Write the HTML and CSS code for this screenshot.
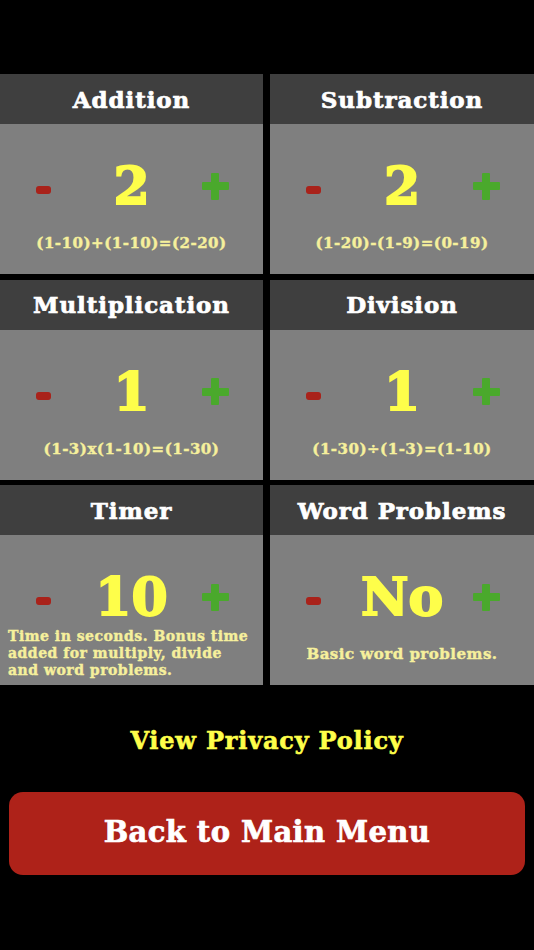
FILE: index.html
```html
<!DOCTYPE html>
<html>
<head>
<meta charset="utf-8">
<link rel="stylesheet" href="styles.css">
</head>
<body>
<div class="page">
  <div class="grid">
    <div class="card">
      <div class="head">Addition</div>
      <div class="body">
        <div class="ctrl"><span class="minus"></span><span class="val">2</span><span class="plus"></span></div>
        <div class="note formula">(1-10)+(1-10)=(2-20)</div>
      </div>
    </div>
    <div class="card">
      <div class="head">Subtraction</div>
      <div class="body">
        <div class="ctrl"><span class="minus"></span><span class="val">2</span><span class="plus"></span></div>
        <div class="note formula">(1-20)-(1-9)=(0-19)</div>
      </div>
    </div>
    <div class="card">
      <div class="head">Multiplication</div>
      <div class="body">
        <div class="ctrl"><span class="minus"></span><span class="val">1</span><span class="plus"></span></div>
        <div class="note formula">(1-3)x(1-10)=(1-30)</div>
      </div>
    </div>
    <div class="card">
      <div class="head">Division</div>
      <div class="body">
        <div class="ctrl"><span class="minus"></span><span class="val">1</span><span class="plus"></span></div>
        <div class="note formula">(1-30)÷(1-3)=(1-10)</div>
      </div>
    </div>
    <div class="card">
      <div class="head">Timer</div>
      <div class="body">
        <div class="ctrl"><span class="minus"></span><span class="val">10</span><span class="plus"></span></div>
        <div class="note desc">Time in seconds. Bonus time<br>added for multiply, divide<br>and word problems.</div>
      </div>
    </div>
    <div class="card">
      <div class="head">Word Problems</div>
      <div class="body">
        <div class="ctrl"><span class="minus"></span><span class="val">No</span><span class="plus"></span></div>
        <div class="note formula">Basic word problems.</div>
      </div>
    </div>
  </div>
  <div class="privacy">View Privacy Policy</div>
  <div class="back">Back to Main Menu</div>
</div>
</body>
</html>
```
FILE: styles.css
```css
html, body {
  margin: 0;
  padding: 0;
  background: #000;
}
.page {
  width: 534px;
  height: 950px;
  font-family: "DejaVu Serif", "Liberation Serif", serif;
  font-weight: bold;
  overflow: hidden;
}
.grid {
  margin-top: 74px;
  display: grid;
  grid-template-columns: 263px 264px;
  grid-auto-rows: 200px;
  column-gap: 7px;
  row-gap: 5.5px;
}
.card {
  display: flex;
  flex-direction: column;
}
.head {
  height: 50px;
  background: #3f3f3f;
  color: #fff;
  font-size: 23px;
  letter-spacing: 0.9px;
  -webkit-text-stroke: 0.7px #fff;
  display: flex;
  align-items: center;
  justify-content: center;
}
.body {
  flex: 1;
  background: #7f7f7f;
  display: flex;
  flex-direction: column;
}
.ctrl {
  margin-top: 32px;
  height: 60px;
  display: grid;
  grid-template-columns: 1fr 1fr 1fr;
  align-items: center;
  justify-items: center;
}
.minus {
  width: 15px;
  height: 8px;
  border-radius: 3px;
  background: #a9221a;
  margin-top: 8px;
  margin-right: 1px;
}
.val {
  color: #fefe4a;
  font-size: 52px;
  line-height: 60px;
  -webkit-text-stroke: 2px #fefe4a;
}
.plus {
  position: relative;
  width: 27px;
  height: 27px;
  margin-right: 8px;
}
.plus::before, .plus::after {
  content: "";
  position: absolute;
  background: #4aa92c;
  border-radius: 1px;
}
.plus::before {
  left: 0;
  right: 0;
  top: 9.5px;
  height: 8px;
}
.plus::after {
  top: 0;
  bottom: 0;
  left: 9.5px;
  width: 8px;
}
.note {
  color: #f6f09c;
  text-align: center;
  -webkit-text-stroke: 0.4px #f6f09c;
}
.formula {
  margin-top: 18px;
  font-size: 15px;
  line-height: 18px;
  letter-spacing: 0.5px;
}
.desc {
  margin-top: 1px;
  text-align: left;
  padding-left: 8px;
  font-size: 14px;
  line-height: 17px;
  letter-spacing: 0.5px;
  white-space: nowrap;
}
.privacy {
  margin-top: 42px;
  text-align: center;
  color: #fefe4a;
  font-size: 24px;
  line-height: 28px;
  letter-spacing: 0.8px;
  -webkit-text-stroke: 0.6px #fefe4a;
}
.back {
  margin: 37px 9px 0 9px;
  height: 83px;
  border-radius: 14px;
  background: #ae2219;
  color: #fff;
  font-size: 29px;
  letter-spacing: 0.4px;
  -webkit-text-stroke: 0.7px #fff;
  display: flex;
  align-items: center;
  justify-content: center;
  padding-bottom: 4px;
  box-sizing: border-box;
}
```
